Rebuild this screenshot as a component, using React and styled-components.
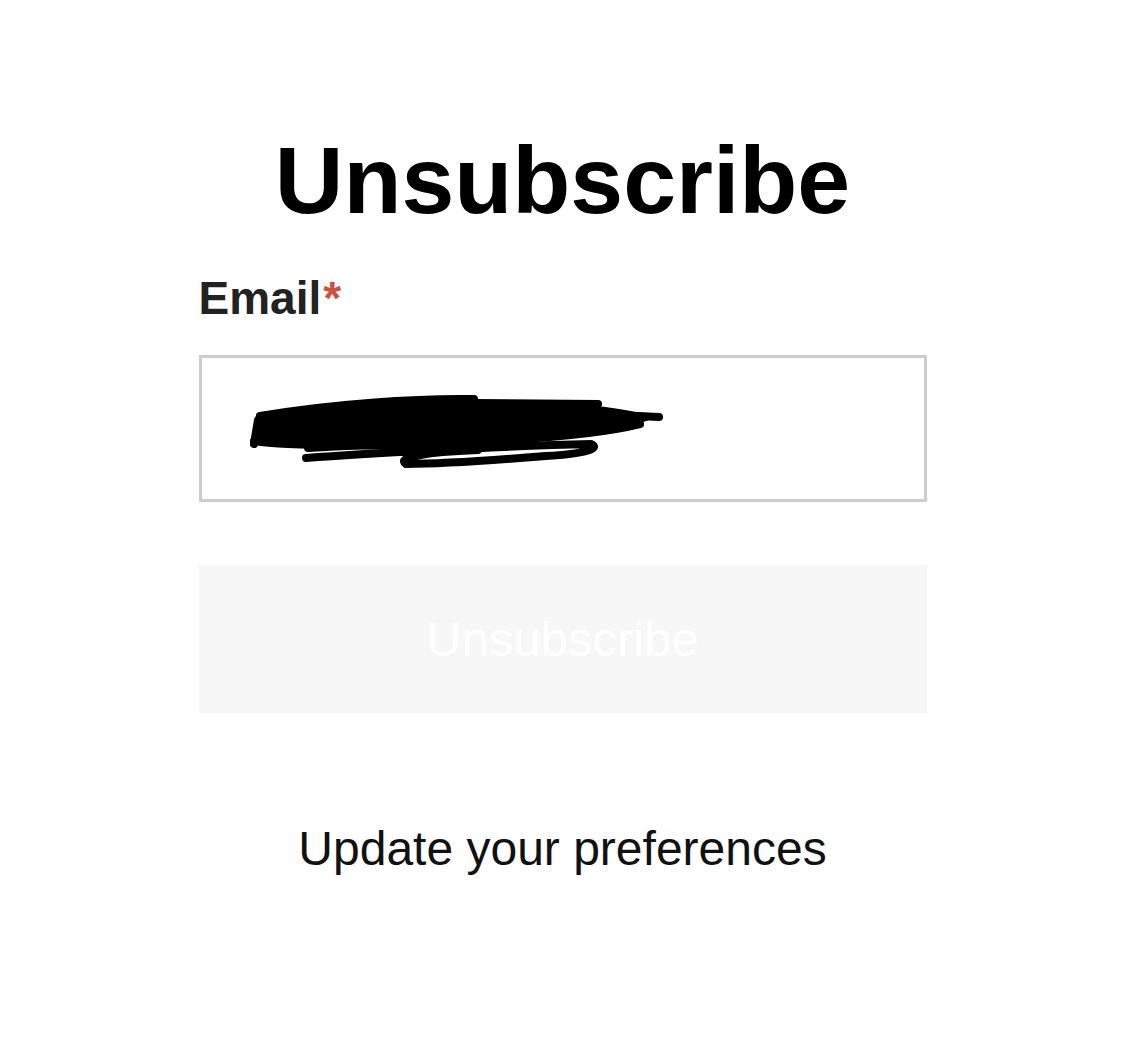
import React from 'react';
import styled, { createGlobalStyle } from 'styled-components';

const GlobalStyle = createGlobalStyle`
  html, body {
    margin: 0;
    padding: 0;
    background: #ffffff;
  }
  body {
    font-family: "Liberation Sans", Arial, sans-serif;
  }
`;

const Page = styled.div`
  width: 728px;
  margin: 0 auto;
  padding-top: 125px;
  display: flex;
  flex-direction: column;
`;

const Title = styled.h1`
  margin: 0;
  font-size: 95px;
  line-height: 110px;
  font-weight: 700;
  text-align: center;
  color: #000;
`;

const Label = styled.label`
  margin-top: 36px;
  font-size: 46px;
  line-height: 54px;
  font-weight: 700;
  color: #222;
`;

const Required = styled.span`
  color: #c9533f;
  margin-left: 2px;
`;

const Field = styled.div`
  margin-top: 30px;
  height: 141px;
  border: 3px solid #cccccc;
  display: flex;
  align-items: center;
  padding-left: 46px;
`;

const Redaction = styled.svg`
  display: block;
  margin-top: 8px;
`;

const SubmitButton = styled.button`
  margin-top: 63px;
  height: 148px;
  border: none;
  background: #f7f7f7;
  color: #ffffff;
  font-family: "Liberation Sans", Arial, sans-serif;
  font-size: 49px;
  font-weight: 400;
  cursor: default;
`;

const PrefsLink = styled.a`
  margin-top: 108px;
  font-size: 48px;
  line-height: 56px;
  text-align: center;
  color: #111;
  text-decoration: none;
`;

function Scribble() {
  return (
    <Redaction width="420" height="78" viewBox="0 0 420 78">
      <g fill="none" stroke="#000" strokeWidth="8" strokeLinecap="round" strokeLinejoin="round">
        <path d="M12,22 C80,10 170,4 226,5" />
        <path d="M226,9 L350,10" />
        <path d="M350,20 L411,23" />
        <path d="M6,47 C40,53 150,52 240,47 C300,44 360,38 392,30" />
        <path d="M58,64 C110,60 250,52 343,50 C353,54 338,60 298,62 C250,66 190,70 158,70 C148,64 175,58 230,56" />
        <path d="M10,26 L6,50" />
        <path d="M14,36 C70,30 160,26 300,24" />
        <path d="M60,54 C120,50 200,50 260,52" />
      </g>
      <path
        d="M10,22 C70,12 170,6 228,8 L350,12 C380,16 403,20 403,25 C380,36 300,46 220,52 C150,57 80,57 8,50 Z"
        fill="#000"
      />
    </Redaction>
  );
}

export default function App() {
  return (
    <>
      <GlobalStyle />
      <Page>
        <Title>Unsubscribe</Title>
        <Label htmlFor="email">
          Email<Required>*</Required>
        </Label>
        <Field>
          <Scribble />
        </Field>
        <SubmitButton type="button">Unsubscribe</SubmitButton>
        <PrefsLink href="#">Update your preferences</PrefsLink>
      </Page>
    </>
  );
}
